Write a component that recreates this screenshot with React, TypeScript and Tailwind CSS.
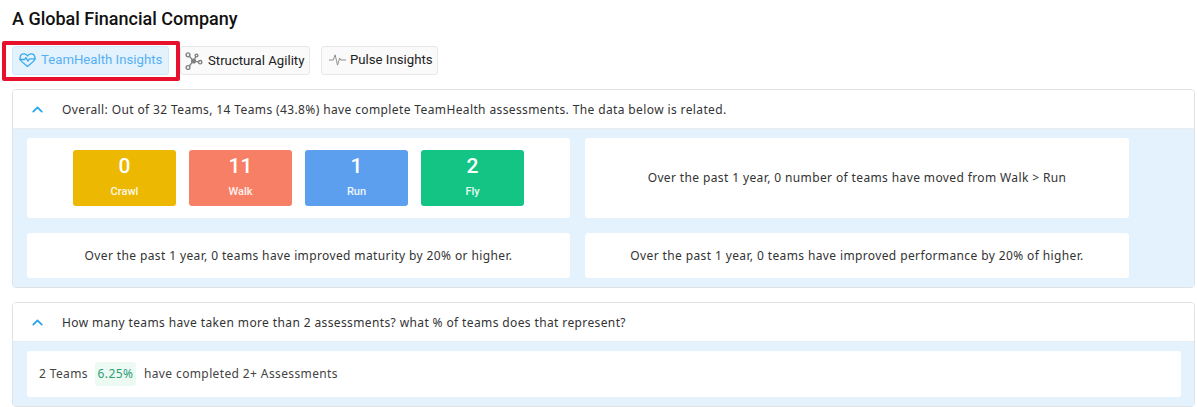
import { ChevronUp } from "lucide-react";

const roboto = "font-['Roboto',sans-serif]";
const body = "font-['Noto_Sans','Roboto',sans-serif]";

const levels = [
  { label: "Crawl", count: 0, bg: "bg-[#ecb802]" },
  { label: "Walk", count: 11, bg: "bg-[#f77f66]" },
  { label: "Run", count: 1, bg: "bg-[#5c9fee]" },
  { label: "Fly", count: 2, bg: "bg-[#13c484]" },
];

function HeartPulseIcon() {
  return (
    <svg width="17" height="17" viewBox="0 0 24 24" fill="none" stroke="#38a9ee" strokeWidth="1.8" strokeLinejoin="round" strokeLinecap="round">
      <path d="M4 15C1.800 12.800 1 10.500 1.600 8.200 2.300 5.400 4.800 3.700 7.400 4.100c1.900.3 3.500 1.300 4.600 2.900 1.100-1.600 2.700-2.600 4.600-2.900 2.600-.4 5.100 1.300 5.800 4.100.6 2.300-.2 4.600-2.400 6.800L12 21.800z" />
      <path d="M1.200 12H8l1.700-2.700 3 5 2-3.300h8.100" />
    </svg>
  );
}

function NodesIcon() {
  return (
    <svg width="18" height="18" viewBox="0 0 18 18" fill="none" stroke="#808080" strokeWidth="1.400">
      <circle cx="3" cy="2.800" r="1.900" />
      <circle cx="8.500" cy="9" r="1.900" fill="#808080" />
      <circle cx="15.200" cy="10.200" r="1.700" />
      <circle cx="3" cy="15.500" r="1.900" />
      <circle cx="11.500" cy="3.500" r="1.400" />
      <path d="M4.300 4.300 7.300 7.600M10.400 9.400l3.100.5M7.200 10.400 4.300 14M9.500 7.300l1.300-2.500" />
    </svg>
  );
}

function PulseIcon() {
  return (
    <svg width="17" height="14" viewBox="0 0 18 14" fill="none" stroke="#8a8a8a" strokeWidth="1">
      <path d="M0 7h4.500l2-5.500 2.500 11 2.300-7.500 1.200 2H18" />
    </svg>
  );
}

function Tab({ icon, label, className }: { icon: React.ReactNode; label: string; className: string }) {
  return (
    <button className={"flex h-[29px] items-center rounded-[3px] border text-[13.2px] " + className}>
      <span className="flex w-[18px] justify-center">{icon}</span>
      <span>{label}</span>
    </button>
  );
}

function PanelHeader({ children }: { children: React.ReactNode }) {
  return (
    <div className="flex h-[39px] items-center border-b border-[#e8edf0] bg-white">
      <ChevronUp className="ml-[16px] text-[#28a5ea]" size={17} strokeWidth={2.5} />
      <span className={`ml-[16px] pt-[2px] text-[12px] tracking-[0.38px] text-[#333] ${body}`}>{children}</span>
    </div>
  );
}

function Note({ children }: { children: React.ReactNode }) {
  return (
    <div className={`flex items-center justify-center rounded-[3px] bg-white text-[12px] tracking-[0.38px] text-[#333] ${body}`}>
      {children}
    </div>
  );
}

export default function App() {
  return (
    <div className={`relative h-[407px] w-[1197px] overflow-hidden bg-white pl-[12px] pr-[2px] ${roboto}`}>
      <h1 className="pt-[8px] text-[18px] font-medium leading-[21px] text-[#111]">A Global Financial Company</h1>

      <div className="mt-[17px] flex gap-[11px]">
        <Tab
          icon={<HeartPulseIcon />}
          label="TeamHealth Insights"
          className="w-[157px] gap-[5px] border-[#cfe8fa] bg-[#e3f2fd] pb-[2px] pl-[5px] text-[#55b1f3]"
        />
        <Tab
          icon={<NodesIcon />}
          label="Structural Agility"
          className="w-[130px] gap-[5px] border-[#e8e8e8] bg-[#fafafa] pl-[4px] text-[#222]"
        />
        <Tab
          icon={<PulseIcon />}
          label="Pulse Insights"
          className="w-[117px] gap-[4px] border-[#e8e8e8] bg-[#fafafa] pb-[2px] pl-[6px] text-[#222]"
        />
      </div>
      <div className="absolute left-[2px] top-[41px] h-[40px] w-[178px] rounded-[2px] border-[4px] border-[#e8112d]" />

      <section className="mt-[14px] overflow-hidden rounded-[4px] border border-[#dfe3e6]">
        <PanelHeader>Overall: Out of 32 Teams, 14 Teams (43.8%) have complete TeamHealth assessments. The data below is related.</PanelHeader>
        <div className="grid grid-cols-[543px_544px] grid-rows-[80px_45px] gap-x-[15px] gap-y-[15px] bg-[#e3f2fd] pb-[9px] pl-[14px] pt-[9px]">
          <div className="flex items-center justify-center gap-[13px] rounded-[3px] bg-white">
            {levels.map((l) => (
              <div key={l.label} className={`flex h-[56px] w-[103px] flex-col items-center rounded-[3px] text-white ${l.bg}`}>
                <span className="pt-[4px] text-[21px] font-medium leading-[25px]">{l.count}</span>
                <span className="pt-[6px] text-[11px] font-medium leading-[14px] text-white/90">{l.label}</span>
              </div>
            ))}
          </div>
          <Note>Over the past 1 year, 0 number of teams have moved from Walk &gt; Run</Note>
          <Note>Over the past 1 year, 0 teams have improved maturity by 20% or higher.</Note>
          <Note>Over the past 1 year, 0 teams have improved performance by 20% of higher.</Note>
        </div>
      </section>

      <section className="mt-[14px] overflow-hidden rounded-[4px] border border-[#dfe3e6]">
        <PanelHeader>How many teams have taken more than 2 assessments? what % of teams does that represent?</PanelHeader>
        <div className="bg-[#e3f2fd] pb-[9px] pl-[14px] pr-[13px] pt-[9px]">
          <div className={`flex h-[46px] items-center rounded-[3px] bg-white pl-[12px] text-[12px] tracking-[0.38px] text-[#444] ${body}`}>
            <span>2 Teams</span>
            <span className="ml-[7px] flex h-[24px] w-[41px] items-center justify-center rounded-[3px] bg-[#ecfaf3] text-[#2f9e77]">6.25%</span>
            <span className="ml-[8px]">have completed 2+ Assessments</span>
          </div>
        </div>
      </section>
    </div>
  );
}
